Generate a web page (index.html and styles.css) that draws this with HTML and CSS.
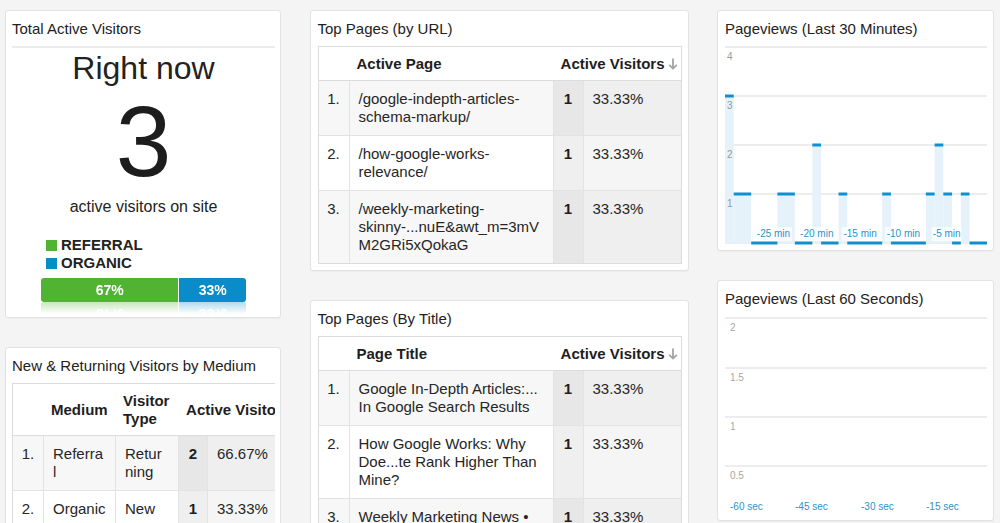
FILE: index.html
```html
<!DOCTYPE html>
<html lang="en">
<head>
<meta charset="utf-8">
<title>Real-Time Overview</title>
<link rel="stylesheet" href="styles.css">
</head>
<body>
<div class="dash">
  <div class="col col-left">
    <section class="card card-visitors">
      <h2 class="title title-rule">Total Active Visitors</h2>
      <div class="rn">Right now</div>
      <div class="count">3</div>
      <div class="sub">active visitors on site</div>
      <ul class="legend">
        <li><span class="sw sw-green"></span>REFERRAL</li>
        <li><span class="sw sw-blue"></span>ORGANIC</li>
      </ul>
      <div class="split">
        <div class="seg seg-green" style="width:67%">67%</div>
        <div class="seg seg-blue">33%</div>
      </div>
    </section>

    <section class="card card-table">
      <h2 class="title">New &amp; Returning Visitors by Medium</h2>
      <div class="clip">
        <table class="tbl tbl-medium">
          <colgroup>
            <col class="w-idx"><col class="w-med"><col class="w-type"><col class="w-n"><col class="w-p">
          </colgroup>
          <thead>
            <tr>
              <th></th>
              <th>Medium</th>
              <th>Visitor<br>Type</th>
              <th colspan="2" class="th-sort">Active Visitors<svg class="arrow" width="10" height="12" viewBox="0 0 10 12"><path d="M5 0.5V10.5M1.2 6.8L5 10.6L8.8 6.8" fill="none" stroke="#a3a3a3" stroke-width="1.8"/></svg></th>
            </tr>
          </thead>
          <tbody>
            <tr class="odd">
              <td class="i">1.</td>
              <td>Referra<br>l</td>
              <td>Retur<br>ning</td>
              <td class="n">2</td>
              <td class="p">66.67%</td>
            </tr>
            <tr class="even">
              <td class="i">2.</td>
              <td>Organic</td>
              <td>New</td>
              <td class="n">1</td>
              <td class="p">33.33%</td>
            </tr>
          </tbody>
        </table>
      </div>
    </section>
  </div>

  <div class="col col-mid">
    <section class="card card-table">
      <h2 class="title">Top Pages (by URL)</h2>
      <table class="tbl tbl-pages">
        <colgroup>
          <col class="w-idx"><col class="w-page"><col class="w-n"><col class="w-p2">
        </colgroup>
        <thead>
          <tr>
            <th></th>
            <th>Active Page</th>
            <th colspan="2" class="th-sort">Active Visitors<svg class="arrow" width="10" height="12" viewBox="0 0 10 12"><path d="M5 0.5V10.5M1.2 6.8L5 10.6L8.8 6.8" fill="none" stroke="#a3a3a3" stroke-width="1.8"/></svg></th>
          </tr>
        </thead>
        <tbody>
          <tr class="odd">
            <td class="i">1.</td>
            <td>/google-indepth-articles-<br>schema-markup/</td>
            <td class="n">1</td>
            <td class="p">33.33%</td>
          </tr>
          <tr class="even">
            <td class="i">2.</td>
            <td>/how-google-works-<br>relevance/</td>
            <td class="n">1</td>
            <td class="p">33.33%</td>
          </tr>
          <tr class="odd">
            <td class="i">3.</td>
            <td>/weekly-marketing-<br>skinny-...nuE&amp;awt_m=3mV<br>M2GRi5xQokaG</td>
            <td class="n">1</td>
            <td class="p">33.33%</td>
          </tr>
        </tbody>
      </table>
    </section>

    <section class="card card-table">
      <h2 class="title">Top Pages (By Title)</h2>
      <table class="tbl tbl-pages">
        <colgroup>
          <col class="w-idx"><col class="w-page"><col class="w-n"><col class="w-p2">
        </colgroup>
        <thead>
          <tr>
            <th></th>
            <th>Page Title</th>
            <th colspan="2" class="th-sort">Active Visitors<svg class="arrow" width="10" height="12" viewBox="0 0 10 12"><path d="M5 0.5V10.5M1.2 6.8L5 10.6L8.8 6.8" fill="none" stroke="#a3a3a3" stroke-width="1.8"/></svg></th>
          </tr>
        </thead>
        <tbody>
          <tr class="odd">
            <td class="i">1.</td>
            <td>Google In-Depth Articles:...<br>In Google Search Results</td>
            <td class="n">1</td>
            <td class="p">33.33%</td>
          </tr>
          <tr class="even">
            <td class="i">2.</td>
            <td>How Google Works: Why<br>Doe...te Rank Higher Than<br>Mine?</td>
            <td class="n">1</td>
            <td class="p">33.33%</td>
          </tr>
          <tr class="odd">
            <td class="i">3.</td>
            <td>Weekly Marketing News •<br>Skinny Links</td>
            <td class="n">1</td>
            <td class="p">33.33%</td>
          </tr>
        </tbody>
      </table>
    </section>
  </div>

  <div class="col col-right">
    <section class="card card-chart">
      <h2 class="title">Pageviews (Last 30 Minutes)</h2>
      <svg class="chart" width="262" height="200" viewBox="0 0 262 200">
        <g class="grid">
          <line x1="0" y1="1" x2="262" y2="1"/>
          <line x1="0" y1="50" x2="262" y2="50"/>
          <line x1="0" y1="99" x2="262" y2="99"/>
          <line x1="0" y1="148" x2="262" y2="148"/>
          <line x1="0" y1="197" x2="262" y2="197"/>
        </g>
        <g class="fills">
          <rect x="0" y="50" width="8.73" height="147"/>
          <rect x="8.73" y="148" width="17.47" height="49"/>
          <rect x="52.4" y="148" width="17.47" height="49"/>
          <rect x="87.33" y="99" width="8.74" height="98"/>
          <rect x="113.53" y="148" width="8.74" height="49"/>
          <rect x="157.2" y="148" width="8.73" height="49"/>
          <rect x="200.87" y="148" width="8.73" height="49"/>
          <rect x="209.6" y="99" width="8.73" height="98"/>
          <rect x="218.33" y="148" width="8.74" height="49"/>
          <rect x="235.8" y="148" width="8.73" height="49"/>
        </g>
        <g class="labbg">
          <rect x="30" y="181" width="37" height="14"/>
          <rect x="73.3" y="181" width="37" height="14"/>
          <rect x="116.6" y="181" width="37" height="14"/>
          <rect x="159.9" y="181" width="37" height="14"/>
          <rect x="206.5" y="181" width="30" height="14"/>
        </g>
        <g class="caps">
          <rect x="0" y="48.5" width="8.73" height="3"/>
          <rect x="8.73" y="146.5" width="17.47" height="3"/>
          <rect x="26.2" y="195.5" width="26.2" height="3"/>
          <rect x="52.4" y="146.5" width="17.47" height="3"/>
          <rect x="69.87" y="195.5" width="17.46" height="3"/>
          <rect x="87.33" y="97.5" width="8.74" height="3"/>
          <rect x="96.07" y="195.5" width="17.46" height="3"/>
          <rect x="113.53" y="146.5" width="8.74" height="3"/>
          <rect x="122.27" y="195.5" width="34.93" height="3"/>
          <rect x="157.2" y="146.5" width="8.73" height="3"/>
          <rect x="165.93" y="195.5" width="34.94" height="3"/>
          <rect x="200.87" y="146.5" width="8.73" height="3"/>
          <rect x="209.6" y="97.5" width="8.73" height="3"/>
          <rect x="218.33" y="146.5" width="8.74" height="3"/>
          <rect x="227.07" y="195.5" width="8.73" height="3"/>
          <rect x="235.8" y="146.5" width="8.73" height="3"/>
          <rect x="244.53" y="195.5" width="17.47" height="3"/>
        </g>
        <g class="ylab">
          <text x="2" y="13.5">4</text>
          <text x="2" y="62.5">3</text>
          <text x="2" y="111.5">2</text>
          <text x="2" y="160.5">1</text>
        </g>
        <g class="xlab">
          <text x="48.5" y="191">-25 min</text>
          <text x="91.8" y="191">-20 min</text>
          <text x="135.1" y="191">-15 min</text>
          <text x="178.4" y="191">-10 min</text>
          <text x="221.7" y="191">-5 min</text>
        </g>
      </svg>
    </section>

    <section class="card card-chart">
      <h2 class="title">Pageviews (Last 60 Seconds)</h2>
      <svg class="chart" width="262" height="200" viewBox="0 0 262 200">
        <g class="grid">
          <line x1="0" y1="2" x2="262" y2="2"/>
          <line x1="0" y1="52" x2="262" y2="52"/>
          <line x1="0" y1="101" x2="262" y2="101"/>
          <line x1="0" y1="150" x2="262" y2="150"/>
        </g>
        <g class="ylab ylab-light">
          <text x="5" y="15">2</text>
          <text x="5" y="65">1.5</text>
          <text x="5" y="114">1</text>
          <text x="5" y="163">0.5</text>
        </g>
        <g class="xlab xlab-start">
          <text x="5" y="194">-60 sec</text>
          <text x="70" y="194">-45 sec</text>
          <text x="136" y="194">-30 sec</text>
          <text x="201" y="194">-15 sec</text>
        </g>
      </svg>
    </section>
  </div>
</div>
</body>
</html>
```

FILE: styles.css
```css
* { box-sizing: border-box; }

html, body {
  margin: 0;
  padding: 0;
  height: 100%;
  overflow: hidden;
}

body {
  background: #f4f4f4;
  font-family: "Liberation Sans", Arial, Helvetica, sans-serif;
  color: #222;
}

.dash {
  display: flex;
  align-items: flex-start;
  gap: 28.5px;
  padding: 10px 0 0 5px;
}

.col {
  display: flex;
  flex-direction: column;
  gap: 28.5px;
}

.col-left { width: 276px; }
.col-mid { width: 379px; }
.col-right { width: 277px; }

.card {
  background: #fff;
  border: 1px solid #e2e2e2;
  border-radius: 3px;
  padding: 0 6px 0 7px;
  box-shadow: 0 1px 1px rgba(0, 0, 0, 0.03);
  overflow: hidden;
}

.col-left .card {
  padding-left: 6px;
  padding-right: 5px;
}

.title {
  margin: 0;
  padding: 9px 0 8px;
  font-size: 15px;
  line-height: 18px;
  font-weight: normal;
  white-space: nowrap;
  color: #222;
}

.title-rule { border-bottom: 2px solid #ececec; }

/* Total active visitors */
.card-visitors { padding-bottom: 15px; }

.rn {
  margin-top: 1px;
  text-align: center;
  font-size: 32px;
  line-height: 38px;
}

.count {
  text-align: center;
  font-size: 100px;
  line-height: 108px;
  color: #1d1d1d;
}

.sub {
  margin-top: 2px;
  text-align: center;
  font-size: 16px;
  line-height: 20px;
}

.legend {
  list-style: none;
  width: 205px;
  margin: 19px auto 0;
  padding: 0 0 0 5px;
  font-size: 15px;
  line-height: 18px;
  font-weight: bold;
}

.legend li {
  display: flex;
  align-items: center;
  gap: 4px;
}

.sw {
  width: 11px;
  height: 11px;
}

.sw-green { background: #50b432; }
.sw-blue { background: #0a8cc8; }

.split {
  display: flex;
  width: 205px;
  height: 24px;
  margin: 6px auto 0;
  border-radius: 3px;
  overflow: hidden;
  color: #fff;
  font-size: 14px;
  font-weight: bold;
  line-height: 24px;
  text-align: center;
  -webkit-box-reflect: below 0 linear-gradient(transparent 50%, rgba(255, 255, 255, 0.32));
}

.seg-green { background: #50b432; }
.seg-blue {
  flex: 1;
  background: #0a8cc8;
  border-left: 1px solid #fff;
}

/* Tables */
.card-table { padding-bottom: 6px; }

.clip { overflow: hidden; }

.tbl {
  border-collapse: separate;
  border-spacing: 0;
  table-layout: fixed;
  border: 1px solid #dcdcdc;
  font-size: 15px;
  line-height: 18px;
  color: #222;
}

.tbl-pages { width: 364px; }
.tbl-medium { width: 295px; }

.w-idx { width: 30px; }
.w-page { width: 204px; }
.w-med { width: 72px; }
.w-type { width: 63px; }
.w-n { width: 30px; }
.tbl-medium .w-n { width: 29px; }
.w-p { width: 99px; }
.w-p2 { width: 98px; }

.tbl th {
  padding: 8px 8px 7px;
  text-align: left;
  font-weight: bold;
  white-space: nowrap;
  vertical-align: middle;
  background: #fff;
  border-bottom: 1px solid #dcdcdc;
  color: #1e1e1e;
}

.tbl th.th-sort {
  text-align: right;
  padding-right: 3px;
  padding-left: 4px;
}

.arrow {
  display: inline-block;
  margin-left: 3px;
  vertical-align: -1px;
}

.tbl td {
  padding: 9px;
  vertical-align: top;
  white-space: nowrap;
  border-top: 1px solid #e3e3e3;
  border-left: 1px solid #e3e3e3;
  color: #262626;
}

.tbl tbody tr:first-child td { border-top: 0; }

.tbl td.i {
  border-left: 0;
  padding-left: 0;
  padding-right: 0;
  text-align: center;
}

.tbl td.n {
  padding-left: 0;
  padding-right: 0;
  text-align: center;
  font-weight: bold;
  color: #1e1e1e;
}

.tbl tr.odd td { background: #f7f7f7; }
.tbl tr.odd td.n { background: #e7e7e7; }
.tbl tr.odd td.p { background: #efefef; }

.tbl tr.even td { background: #fff; }
.tbl tr.even td.n { background: #efefef; }
.tbl tr.even td.p { background: #f5f5f5; }

/* Charts */
.card-chart { padding-bottom: 4px; }

.chart {
  display: block;
  width: 262px;
  height: 200px;
}

.chart text {
  font-family: "Liberation Sans", Arial, Helvetica, sans-serif;
  font-size: 10px;
}

.grid line {
  stroke: #ededed;
  stroke-width: 2;
}

.fills rect { fill: #e5f2fa; }
.caps rect { fill: #118fcd; }
.labbg rect { fill: #fff; opacity: 0.75; }

.ylab text { fill: #9a9a9a; }
.ylab-light text { fill: #a8a8a8; }

.xlab text {
  fill: #2b93cc;
  text-anchor: middle;
}

.xlab-start text { text-anchor: start; }
```
